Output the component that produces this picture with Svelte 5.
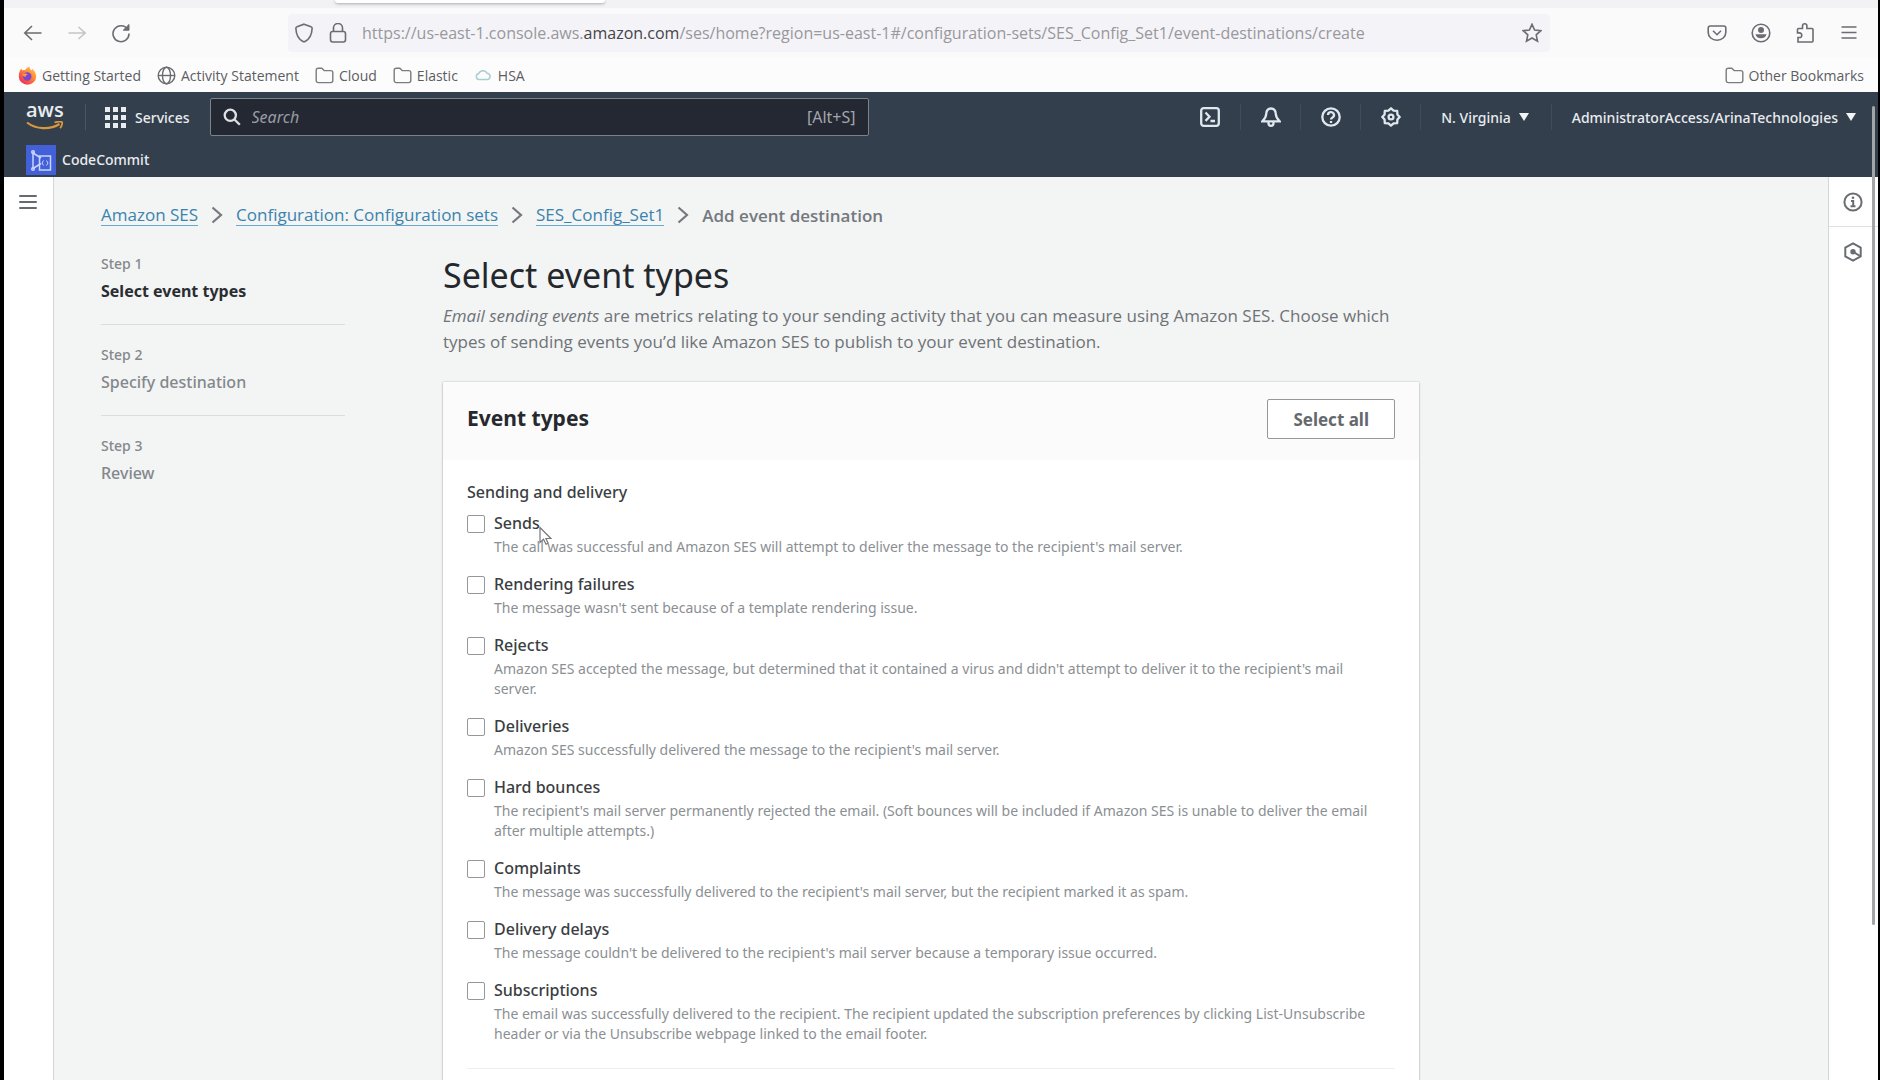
<script lang="ts">
	const bookmarks = [
		{ icon: 'firefox', label: 'Getting Started' },
		{ icon: 'globe', label: 'Activity Statement' },
		{ icon: 'folder', label: 'Cloud' },
		{ icon: 'folder', label: 'Elastic' },
		{ icon: 'cloud', label: 'HSA' }
	];

	const crumbs = ['Amazon SES', 'Configuration: Configuration sets', 'SES_Config_Set1'];

	const steps = ['Select event types', 'Specify destination', 'Review'];
	const currentStep = 0;

	let eventTypes = $state([
		{
			id: 'sends',
			label: 'Sends',
			description:
				"The call was successful and Amazon SES will attempt to deliver the message to the recipient's mail server.",
			checked: false
		},
		{
			id: 'rendering-failures',
			label: 'Rendering failures',
			description: "The message wasn't sent because of a template rendering issue.",
			checked: false
		},
		{
			id: 'rejects',
			label: 'Rejects',
			description:
				"Amazon SES accepted the message, but determined that it contained a virus and didn't attempt to deliver it to the recipient's mail server.",
			checked: false
		},
		{
			id: 'deliveries',
			label: 'Deliveries',
			description: "Amazon SES successfully delivered the message to the recipient's mail server.",
			checked: false
		},
		{
			id: 'hard-bounces',
			label: 'Hard bounces',
			description:
				"The recipient's mail server permanently rejected the email. (Soft bounces will be included if Amazon SES is unable to deliver the email after multiple attempts.)",
			checked: false
		},
		{
			id: 'complaints',
			label: 'Complaints',
			description:
				"The message was successfully delivered to the recipient's mail server, but the recipient marked it as spam.",
			checked: false
		},
		{
			id: 'delivery-delays',
			label: 'Delivery delays',
			description:
				"The message couldn't be delivered to the recipient's mail server because a temporary issue occurred.",
			checked: false
		},
		{
			id: 'subscriptions',
			label: 'Subscriptions',
			description:
				'The email was successfully delivered to the recipient. The recipient updated the subscription preferences by clicking List-Unsubscribe header or via the Unsubscribe webpage linked to the email footer.',
			checked: false
		}
	]);

	function selectAll() {
		const next = !eventTypes.every((t) => t.checked);
		for (const type of eventTypes) type.checked = next;
	}
</script>

{#snippet folder()}
	<svg class="bm-icon" viewBox="0 0 19 19" fill="none" stroke="#7b7b80" stroke-width="1.4">
		<path
			d="M1.2 4.2a2 2 0 0 1 2-2h3.6l2.4 2.4h6.6a2 2 0 0 1 2 2v8a2 2 0 0 1-2 2H3.2a2 2 0 0 1-2-2z"
		/>
	</svg>
{/snippet}

<div class="window">
	<div class="tab-strip">
		<div class="active-tab"></div>
	</div>

	<!-- Browser toolbar -->
	<div class="toolbar">
		<div class="tools">
			<button aria-label="Back">
				<svg viewBox="0 0 20 20"><path d="M18.5 10H1.5M9 3 1.8 10 9 17" /></svg>
			</button>
			<button aria-label="Forward" disabled>
				<svg viewBox="0 0 20 20"><path d="M1.5 10h17M11.5 4l6.7 6-6.7 6" /></svg>
			</button>
			<button aria-label="Reload">
				<svg viewBox="0 0 20 20">
					<path d="M16.8 6.5A8 8 0 1 0 18 10.5" />
					<path d="M18 1.5v5.7h-5.7z" fill="currentColor" stroke-width="1" />
				</svg>
			</button>
		</div>

		<div class="url-bar">
			<svg viewBox="0 0 20 20">
				<path
					d="M10 1.2 17 3.8c.9.3 1.2 1 1.1 1.9-.3 6-2.9 10.3-6.7 12.6-.9.5-1.9.5-2.8 0C4.8 16 2.2 11.7 1.9 5.7 1.8 4.8 2.1 4.1 3 3.8z"
				/>
			</svg>
			<svg viewBox="0 0 20 20">
				<rect x="2.5" y="8.5" width="15" height="10.5" rx="2.2" />
				<path d="M5.5 8.5V5a4.5 4.5 0 0 1 9 0v3.5" />
			</svg>
			<div class="url" role="textbox" tabindex="0" aria-label="Address">
				https://us-east-1.console.aws.<b>amazon.com</b
				>/ses/home?region=us-east-1#/configuration-sets/SES_Config_Set1/event-destinations/create
			</div>
			<button aria-label="Bookmark this page">
				<svg viewBox="0 0 20 20">
					<path
						d="m10 1.3 2.6 5.7 6.2.7-4.6 4.2 1.3 6.3L10 15l-5.5 3.2 1.3-6.3L1.2 7.7l6.2-.7z"
					/>
				</svg>
			</button>
		</div>

		<div class="tools">
			<button aria-label="Save to Pocket">
				<svg viewBox="0 0 20 20">
					<path d="M3.2 3h13.6a2 2 0 0 1 2 2v4.5a8.8 7.8 0 0 1-17.6 0V5a2 2 0 0 1 2-2z" />
					<path d="m6 7.8 4 3.9 4-3.9" />
				</svg>
			</button>
			<button aria-label="Account">
				<svg viewBox="0 0 20 20">
					<circle cx="10" cy="10" r="8.8" />
					<circle cx="10" cy="7" r="3" fill="currentColor" stroke="none" />
					<path d="M4.5 11.3h11a5.6 5 0 0 1-11 0z" fill="currentColor" stroke="none" />
				</svg>
			</button>
			<button aria-label="Extensions">
				<svg viewBox="0 0 20 20">
					<path
						d="M3 19v-4.5h1.5a2.2 2.2 0 0 0 0-4.6H2.500V6.500a1 1 0 0 1 1-1h4V3a2.200 2.200 0 0 1 4.400 0v2.500H17a1 1 0 0 1 1 1V18a1 1 0 0 1-1 1z"
					/>
				</svg>
			</button>
			<button aria-label="Open application menu">
				<svg viewBox="0 0 20 20"><path d="M2.5 4h15M2.5 9.5h15M2.5 15h15" /></svg>
			</button>
		</div>
	</div>

	<nav class="bookmarks" aria-label="Bookmarks">
		{#each bookmarks as bookmark}
			<a href="#bookmark">
				{#if bookmark.icon === 'firefox'}
					<svg class="bm-icon" viewBox="0 0 19 19">
						<defs>
							<linearGradient id="flame" x1="1" y1="0" x2="0.2" y2="1">
								<stop offset="0" stop-color="#ffd84a" />
								<stop offset="0.5" stop-color="#ff8038" />
								<stop offset="1" stop-color="#e92a5c" />
							</linearGradient>
						</defs>
						<path
							d="M2 4.5c.5-1 1-1.5 1.5-2 0 1 .3 1.6.8 2 1-.4 2-.5 3-.3C8 2.5 9.500 1.500 11.500.5c-.2 2 .8 2.800 2.300 4 .2-.7.200-1.200 0-2 2.700 2 4.400 4.800 4.400 8A8.700 8.300 0 0 1 .8 10.500c0-2.300.4-4.300 1.200-6z"
							fill="url(#flame)"
						/>
						<circle cx="9.3" cy="10.5" r="4.2" fill="#7a45d0" />
						<path
							d="M4.5 8.5c2-1.8 4-.8 5.5 0-1.5.3-2.500 1-2.200 2.200-1.500.3-3-.7-3.300-2.200z"
							fill="#ff9b3c"
						/>
					</svg>
				{:else if bookmark.icon === 'globe'}
					<svg class="bm-icon" viewBox="0 0 19 19" fill="none" stroke="#6a6a70" stroke-width="1.4">
						<circle cx="9.5" cy="9.5" r="8.3" />
						<ellipse cx="9.5" cy="9.5" rx="4" ry="8.3" />
						<path d="M1.2 9.5h16.6" />
					</svg>
				{:else if bookmark.icon === 'cloud'}
					<svg class="bm-icon" viewBox="0 0 19 19" fill="none" stroke="#a9cdd0" stroke-width="1.5">
						<path d="M5 13.5a3 3 0 0 1-.3-5.9A4.5 4.5 0 0 1 13 7.3a3.2 3.2 0 0 1 1 6.2z" />
					</svg>
				{:else}
					{@render folder()}
				{/if}
				{bookmark.label}
			</a>
		{/each}
		<a href="#bookmark" class="other">{@render folder()}Other Bookmarks</a>
	</nav>

	<!-- Console navigation -->
	<header class="console-nav">
		<div class="nav-row">
			<a href="#home" class="logo" aria-label="AWS home">
				<span>aws</span>
				<svg viewBox="0 0 38 9" fill="none" stroke="#d9973b" stroke-width="2.2">
					<path d="M1 1.5C10 8.5 24 9 33.5 3" />
					<path d="M28.5 1.5c3-.9 6.5-1.2 7.5-.4.6.8-.3 4-1.8 6.2" stroke-width="1.8" />
				</svg>
			</a>
			<button class="services">
				<svg viewBox="0 0 21 21" fill="currentColor">
					{#each [0, 8, 16] as y}
						{#each [0, 8, 16] as x}
							<rect {x} {y} width="5" height="5" />
						{/each}
					{/each}
				</svg>
				Services
			</button>
			<label class="search">
				<svg viewBox="0 0 18 18" fill="none" stroke="currentColor" stroke-width="2.3">
					<circle cx="7.3" cy="7.3" r="5.6" />
					<path d="m11.5 11.5 5.3 5.3" />
				</svg>
				<input type="text" placeholder="Search" aria-label="Search" />
				<span>[Alt+S]</span>
			</label>

			<div class="nav-right">
				<button class="nav-icon" aria-label="CloudShell">
					<svg viewBox="0 0 20 20">
						<rect x="1.2" y="1.2" width="17.6" height="17.6" rx="2.5" />
						<path d="m5.5 5.5 4 4.2-4 4.2M10.5 14H15" />
					</svg>
				</button>
				<button class="nav-icon" aria-label="Notifications">
					<svg viewBox="0 0 20 20">
						<path
							d="M10 1.5c-3 0-4.6 2.3-4.8 5.5C5 10.5 4 12 1.3 14.3h17.4C16 12 15 10.5 14.8 7c-.2-3.2-1.8-5.5-4.8-5.5z"
						/>
						<path d="M7.5 14.8v1.5a2.5 2.5 0 0 0 5 0v-1.5" />
					</svg>
				</button>
				<button class="nav-icon" aria-label="Help">
					<svg viewBox="0 0 20 20">
						<circle cx="10" cy="10" r="8.7" />
						<path d="M7 8a3 2.8 0 1 1 4.5 2.4c-1 .6-1.5 1-1.5 2.1M10 14v2" />
					</svg>
				</button>
				<button class="nav-icon" aria-label="Settings">
					<svg viewBox="0 0 20 20">
						<path
							d="M10 1.3 12.6 3.6 16.2 3.8 16.4 7.4 18.7 10 16.4 12.6 16.2 16.2 12.6 16.4 10 18.7 7.4 16.4 3.8 16.2 3.6 12.6 1.3 10 3.6 7.4 3.8 3.8 7.4 3.6z"
							stroke-linejoin="round"
						/>
						<circle cx="10" cy="10" r="2.4" />
					</svg>
				</button>
				<button class="nav-menu">N. Virginia<i></i></button>
				<button class="nav-menu">AdministratorAccess/ArinaTechnologies<i></i></button>
			</div>
		</div>
		<div class="favorites">
			<a href="#codecommit">
				<svg viewBox="0 0 30 30" fill="none" stroke="#c9d4ff" stroke-width="1.5">
					<rect width="30" height="30" fill="#4260d8" stroke="none" />
					<path d="M7 7v17M7 8l8 5M7 23.5l8-5" />
					<circle cx="7" cy="7" r="1.3" />
					<circle cx="7" cy="24" r="1.3" />
					<path d="M13.5 11h11v14h-11z" />
					<path d="m17.5 15.5-1.5 2.5 1.5 2.5M20.5 15.5l1.5 2.5-1.5 2.5" stroke-width="1" />
				</svg>
				CodeCommit
			</a>
		</div>
	</header>

	<div class="shell">
		<aside class="side-bar">
			<button aria-label="Open navigation">
				<svg viewBox="0 0 18 16" stroke="#666b70" stroke-width="2" stroke-linecap="round">
					<path d="M1 2h16M1 8h16M1 14h16" />
				</svg>
			</button>
		</aside>

		<main>
			<nav class="breadcrumbs" aria-label="Breadcrumbs">
				{#each crumbs as crumb}
					<a href="#crumb">{crumb}</a>
					<svg viewBox="0 0 12 18" fill="none" stroke="#74797e" stroke-width="2.2">
						<path d="m1.5 1.5 8.5 7.5-8.5 7.5" />
					</svg>
				{/each}
				<span>Add event destination</span>
			</nav>

			<div class="wizard">
				<ol class="steps">
					{#each steps as step, i}
						<li class:active={i === currentStep}>
							<small>Step {i + 1}</small>
							<span>{step}</span>
						</li>
					{/each}
				</ol>

				<section>
					<h1>Select event types</h1>
					<p class="intro">
						<em>Email sending events</em> are metrics relating to your sending activity that you can
						measure using Amazon SES. Choose which types of sending events you’d like Amazon SES to
						publish to your event destination.
					</p>

					<div class="card">
						<div class="card-header">
							<h2>Event types</h2>
							<button onclick={selectAll}>Select all</button>
						</div>
						<fieldset>
							<legend>Sending and delivery</legend>
							{#each eventTypes as type}
								<div class="option">
									<input
										type="checkbox"
										id={type.id}
										aria-describedby="{type.id}-description"
										bind:checked={type.checked}
									/>
									<div>
										<label for={type.id}>{type.label}</label>
										<p id="{type.id}-description">{type.description}</p>
									</div>
								</div>
							{/each}
						</fieldset>
					</div>
				</section>
			</div>
		</main>

		<aside class="tools-bar">
			<button aria-label="Info">
				<svg viewBox="0 0 20 20" fill="none" stroke="currentColor" stroke-width="2">
					<circle cx="10" cy="10" r="8.6" />
					<path d="M8 9h2.2v5M7.5 14.2h5" />
					<circle cx="10" cy="5.8" r="1.3" fill="currentColor" stroke="none" />
				</svg>
			</button>
			<button aria-label="Tutorials">
				<svg viewBox="0 0 20 20" fill="none" stroke="currentColor" stroke-width="2">
					<path d="m10 1.3 7.7 4.3v8.8L10 18.7l-7.7-4.3V5.6z" />
					<circle cx="10" cy="9.8" r="2.7" fill="currentColor" stroke="none" />
					<path d="m10.5 10 6.5 4" />
				</svg>
			</button>
		</aside>
	</div>

	<div class="scroll-thumb"></div>

	<svg class="pointer" viewBox="0 0 14 20" fill="#fff" stroke="#77777b" stroke-width="1.2">
		<path d="M1 1.5v15l3.5-3.2 2.5 5 2.2-1-2.3-4.8h5z" />
	</svg>
</div>

<style>
	:global(body) {
		margin: 0;
		background: #000;
	}

	.window {
		position: relative;
		display: flex;
		flex-direction: column;
		box-sizing: border-box;
		height: 100vh;
		overflow: hidden;
		border-left: 4px solid #000;
		border-right: 2px solid #000;
		background: #f3f4f4;
		color: #3a3e42;
		font-family: 'Noto Sans', 'Open Sans', sans-serif;
		font-size: 16px;
	}

	button {
		padding: 0;
		border: 0;
		background: none;
		color: inherit;
		font: inherit;
		cursor: pointer;
	}

	a {
		color: inherit;
		text-decoration: none;
	}

	svg {
		display: block;
		flex: none;
	}

	/* Browser */
	.tab-strip {
		flex: none;
		height: 8px;
		padding-left: 331px;
		background: #f2f2f5;
	}

	.active-tab {
		width: 270px;
		height: 3px;
		border-radius: 0 0 4px 4px;
		background: #fff;
		box-shadow: 0 1px 3px rgba(0, 0, 0, 0.3);
	}

	.toolbar {
		display: flex;
		flex: none;
		align-items: center;
		gap: 157px;
		height: 50px;
		padding: 0 19px;
		background: #fafafb;
		color: #6c6c72;
	}

	.tools {
		display: flex;
		gap: 24px;
	}

	.toolbar svg {
		width: 20px;
		height: 20px;
		fill: none;
		stroke: currentColor;
		stroke-width: 1.6;
	}

	.tools button:disabled {
		color: #c5c5c9;
	}

	.url-bar {
		display: flex;
		flex: 1;
		align-items: center;
		gap: 14px;
		min-width: 0;
		height: 38px;
		padding: 0 8px 0 6px;
		border-radius: 4px;
		background: #f4f3f7;
	}

	.url {
		flex: 1;
		overflow: hidden;
		color: #98989d;
		font-family: 'Open Sans', sans-serif;
		white-space: nowrap;
	}

	.url b {
		color: #45454a;
		font-weight: 400;
	}

	.bookmarks {
		display: flex;
		flex: none;
		align-items: center;
		gap: 16px;
		height: 34px;
		padding: 0 14px;
		background: #fcfcfd;
		color: #5c5c62;
		font-family: 'Open Sans', sans-serif;
		font-size: 14px;
	}

	.bookmarks a {
		display: flex;
		align-items: center;
		gap: 5px;
	}

	.bm-icon {
		width: 19px;
		height: 19px;
	}

	.other {
		margin-left: auto;
	}

	/* Console navigation */
	.console-nav {
		flex: none;
		background: #333f4d;
		color: #e9ecef;
		font-size: 14px;
		font-weight: 500;
	}

	.nav-row {
		display: flex;
		align-items: center;
		height: 50px;
		padding-left: 22px;
	}

	.logo {
		padding-right: 21px;
		border-right: 1px solid #4b5665;
	}

	.logo span {
		display: block;
		height: 17px;
		font-family: 'Open Sans', sans-serif;
		font-size: 20px;
		font-weight: 600;
		line-height: 12px;
	}

	.logo svg {
		width: 38px;
		height: 9px;
	}

	.services {
		display: flex;
		align-items: center;
		gap: 9px;
		padding: 0 20px 0 19px;
	}

	.services svg {
		width: 21px;
		height: 21px;
	}

	.search {
		display: flex;
		flex: 0 1 659px;
		align-items: center;
		gap: 11px;
		box-sizing: border-box;
		height: 38px;
		padding: 0 12px;
		border: 1px solid #7b848c;
		border-radius: 2px;
		background: #242833;
		color: #a3a6ab;
		font-size: 16px;
		font-weight: 400;
	}

	.search svg {
		width: 18px;
		height: 18px;
		color: #dfe1e4;
	}

	.search input {
		flex: 1;
		min-width: 0;
		padding: 0;
		border: 0;
		outline: 0;
		background: none;
		color: #fff;
		font: inherit;
	}

	.search input::placeholder {
		color: #999ca2;
		font-style: italic;
		opacity: 1;
	}

	.nav-right {
		display: flex;
		margin-left: auto;
	}

	.nav-right button {
		display: flex;
		align-items: center;
		height: 26px;
	}

	.nav-right button + button {
		border-left: 1px solid #414c5b;
	}

	.nav-icon {
		justify-content: center;
		width: 60px;
	}

	.nav-icon svg {
		width: 20px;
		height: 20px;
		fill: none;
		stroke: #dfe8ee;
		stroke-width: 2.3;
	}

	.nav-right .nav-menu {
		gap: 8px;
		padding: 0 22px 0 20px;
	}

	.nav-menu i {
		border: 5px solid transparent;
		border-top: 8px solid #f2f4f6;
		border-bottom: 0;
	}

	.favorites {
		display: flex;
		align-items: center;
		height: 35px;
		padding-left: 22px;
	}

	.favorites a {
		display: flex;
		align-items: center;
		gap: 6px;
	}

	.favorites svg {
		width: 30px;
		height: 30px;
	}

	/* Page */
	.shell {
		display: flex;
		flex: 1;
		min-height: 0;
	}

	.side-bar {
		width: 49px;
		border-right: 1px solid #d3d6d8;
		background: #fff;
	}

	.side-bar button {
		display: block;
		margin: 17px 15px;
	}

	.side-bar svg {
		width: 18px;
		height: 16px;
	}

	main {
		flex: 1;
		min-width: 0;
		padding: 25px 47px 0;
		font-weight: 500;
	}

	.breadcrumbs {
		display: flex;
		align-items: center;
		gap: 13px;
		height: 26px;
		font-family: 'Open Sans', sans-serif;
		font-size: 17px;
		font-weight: 400;
	}

	.breadcrumbs a {
		border-bottom: 1px solid #6aa9cc;
		color: #3b83ad;
		line-height: 20px;
	}

	.breadcrumbs svg {
		width: 12px;
		height: 18px;
	}

	.breadcrumbs span {
		color: #74797e;
		font-weight: 600;
	}

	.wizard {
		display: grid;
		grid-template-columns: 244px minmax(0, 976px);
		gap: 98px;
		margin-top: 26px;
	}

	.steps {
		margin: 0;
		padding: 0;
		list-style: none;
		color: #83888c;
	}

	.steps li {
		padding-bottom: 21px;
	}

	.steps li + li {
		padding-top: 20px;
		border-top: 1px solid #d9dddf;
	}

	.steps small {
		display: block;
		margin-bottom: 5px;
		font-size: 14px;
		line-height: 20px;
	}

	.steps span {
		display: block;
		line-height: 24px;
	}

	.active span {
		color: #2a2d31;
		font-weight: 700;
	}

	h1 {
		margin: 0 0 7px;
		color: #24282c;
		font-size: 34px;
		font-weight: 400;
		line-height: 42px;
	}

	.intro {
		margin: 0 0 27px;
		color: #6e7377;
		font-family: 'Open Sans', sans-serif;
		font-size: 17px;
		font-weight: 400;
		line-height: 26px;
	}

	.card {
		padding-bottom: 40px;
		background: #fff;
		box-shadow:
			0 0 2px rgba(0, 0, 0, 0.2),
			0 1px 2px rgba(0, 0, 0, 0.2);
	}

	.card-header {
		display: flex;
		align-items: flex-start;
		justify-content: space-between;
		padding: 17px 24px 21px;
		background: #fbfbfb;
	}

	h2 {
		margin: 0;
		color: #26292d;
		font-size: 21px;
		font-weight: 700;
		line-height: 38px;
	}

	.card-header button {
		box-sizing: border-box;
		height: 40px;
		padding: 0 25px;
		border: 1px solid #94989b;
		border-radius: 2px;
		background: #fff;
		color: #65696d;
		font-size: 17px;
		font-weight: 700;
	}

	fieldset {
		min-width: 0;
		margin: 0 24px;
		padding: 20px 0 24px;
		border: 0;
		border-bottom: 1px solid #eceeef;
	}

	legend {
		float: left;
		width: 100%;
		margin-bottom: 5px;
		padding: 0;
		line-height: 24px;
	}

	.option {
		display: flex;
		clear: both;
		gap: 9px;
		padding-right: 12px;
	}

	.option + .option {
		margin-top: 13px;
	}

	.option input {
		flex: none;
		width: 18px;
		height: 18px;
		margin: 6px 0 0;
		border: 1px solid #94989b;
		border-radius: 2px;
		background: #fff;
		appearance: none;
	}

	.option input:checked {
		border-color: #0073bb;
		background: #0073bb;
	}

	.option label {
		display: block;
		line-height: 28px;
	}

	.option p {
		margin: 0;
		color: #8b8f93;
		font-size: 14px;
		font-weight: 400;
		line-height: 20px;
	}

	.tools-bar {
		width: 49px;
		border-left: 1px solid #d3d6d8;
		background: #fff;
		color: #6a6e72;
	}

	.tools-bar button {
		display: block;
		width: 100%;
		height: 50px;
		padding: 0 14px;
		border-bottom: 1px solid #dfe1e3;
	}

	.tools-bar button:last-child {
		border: 0;
	}

	.tools-bar svg {
		width: 20px;
		height: 20px;
	}

	.scroll-thumb {
		position: absolute;
		top: 106px;
		right: 3px;
		bottom: 155px;
		width: 3px;
		border-radius: 2px;
		background: #a3a6a8;
	}

	.pointer {
		position: absolute;
		top: 526px;
		left: 535px;
		width: 14px;
		height: 20px;
	}
</style>
